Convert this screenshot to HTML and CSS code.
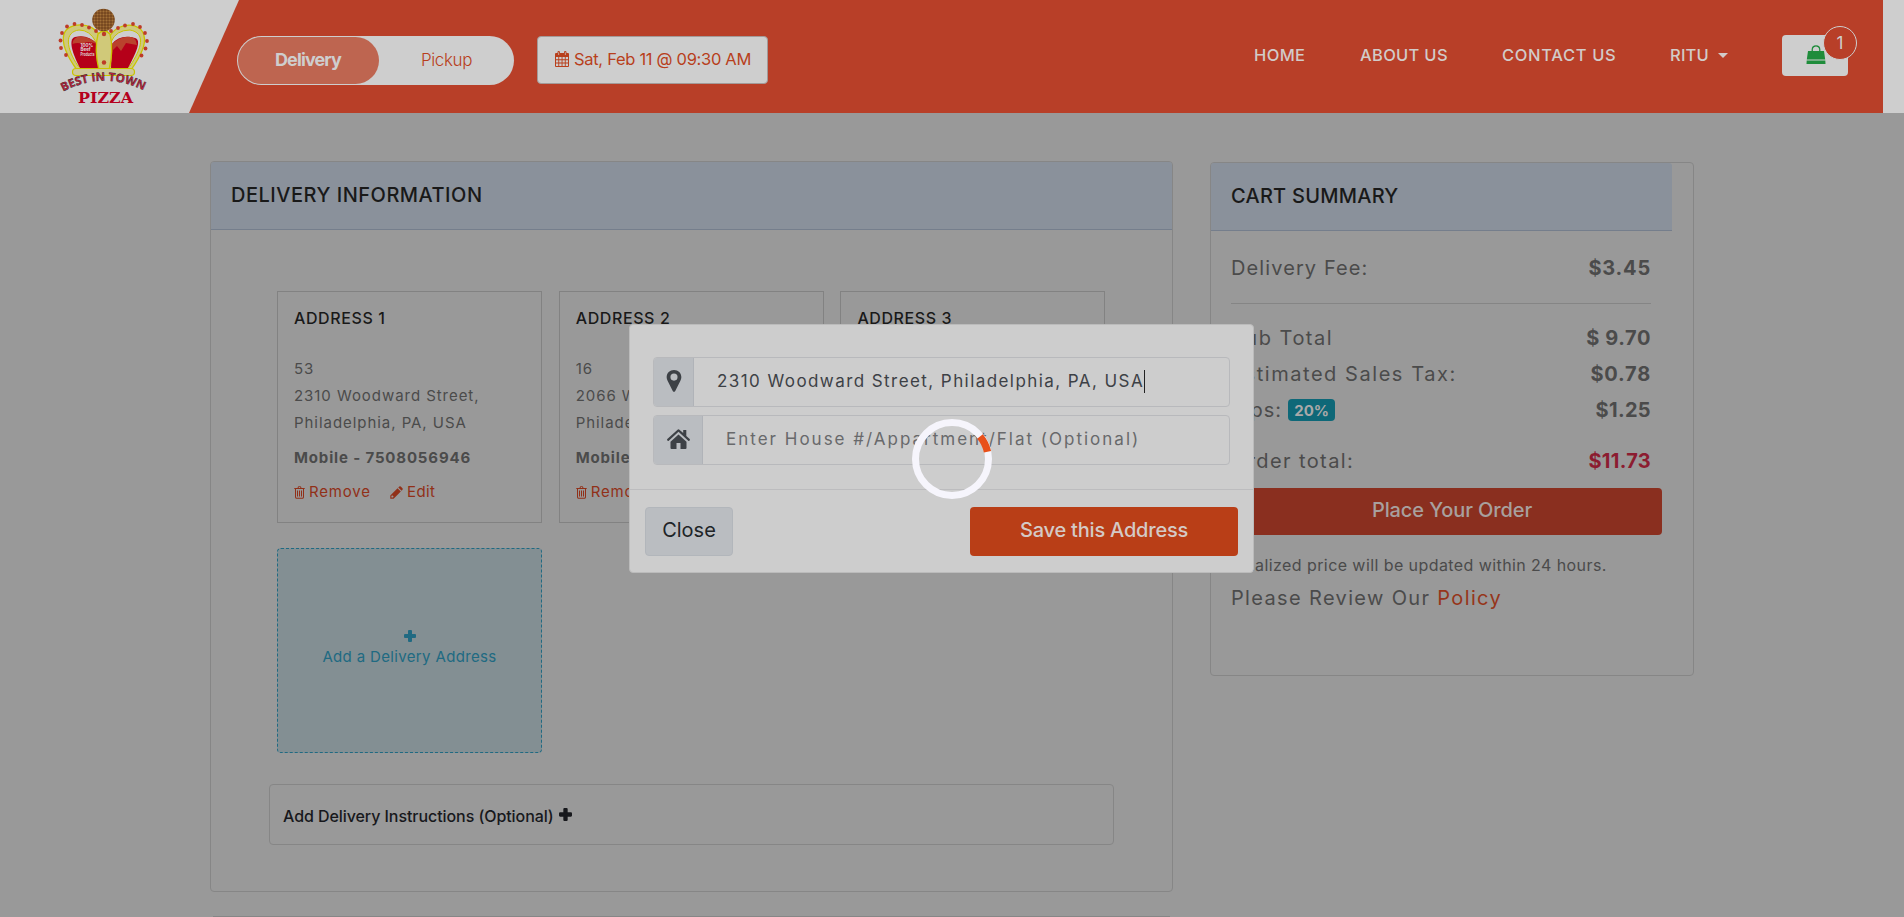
FILE: index.html
```html
<!DOCTYPE html>
<html lang="en">
<head>
<meta charset="utf-8">
<title>Best In Town Pizza - Checkout</title>
<link rel="stylesheet" href="styles.css">
</head>
<body>
<svg class="sprite" aria-hidden="true">
  <symbol id="trash" viewBox="0 0 11 13"><path fill-rule="evenodd" d="M3.500 1.900 4 .7Q4.200 .2 4.700 .2H6.300Q6.800 .2 7 .7L7.500 1.900H10.700V3H10V10.900Q10 12.700 8.700 12.700H2.300Q1 12.700 1 10.900V3H.3V1.900ZM4.600 1.900H6.400L6.100 1.100H4.900ZM2 3V10.900Q2 11.700 2.600 11.700H8.400Q9 11.700 9 10.900V3ZM3 4.400H4V10.400H3ZM5 4.400H6V10.400H5ZM7 4.400H8V10.400H7Z"/></symbol>
  <symbol id="pencil" viewBox="0 0 13 13"><path fill-rule="evenodd" d="M.3 12.700V9.400L7.500 2.200L10.800 5.500L3.600 12.700ZM1.400 10.100V11.600H2.900L3.700 10.800L2.200 9.300ZM8.300 1.400 9.300 .5Q10 0 10.700 .5L12.500 2.300Q13 3 12.500 3.700L11.600 4.700Z"/></symbol>
  <symbol id="plus" viewBox="0 0 12 12"><path d="M5 0H7Q8 0 8 1V4H11Q12 4 12 5V7Q12 8 11 8H8V11Q8 12 7 12H5Q4 12 4 11V8H1Q0 8 0 7V5Q0 4 1 4H4V1Q4 0 5 0Z"/></symbol>
</svg>

<header class="header">
  <div class="brand">
    <svg class="logo" viewBox="0 0 110 110">
      <defs>
        <pattern id="crust" width="3" height="3" patternUnits="userSpaceOnUse"><rect width="3" height="3" fill="#8d5a2a"/><circle cx="1" cy="1" r=".8" fill="#5d3514"/><circle cx="2.500" cy="2.500" r=".5" fill="#a87a3c"/></pattern>
        <path id="arc" d="M13 91.500Q54 70 96 91.500"/>
      </defs>
      <path d="M27 70C19 59 11 44 14 34C18 22 42 21 50 36C53 29 57 29 60 36C68 21 92 22 94 36C97 46 88 60 81 70Z" fill="#cfc97a" stroke="#c9c400" stroke-width="1.300"/>
      <path d="M28 66C16 48 14 32 29 30Q40 30 46 42V67Z" fill="#cecece" stroke="#c9c400"/>
      <path d="M80 66C92 48 96 33 80 30Q66 30 61 42V67Z" fill="#cecece" stroke="#c9c400"/>
      <path d="M30 68C22 53 18 39 25 37Q38 34 47 44L48 68Z" fill="#b50019"/>
      <path d="M78 68C86 53 92 40 85 38Q70 34 62 44L61 68Z" fill="#b50019"/>
      <path d="M22.500 44Q23 36 32 36.500Q42 38 47 44Q37 40 33 44Q27 42 22.500 44ZM87 45Q86 35 76 37Q68 38 62 44L63 50L67 46L71 51L76 43Z" fill="#ba422d"/>
      <path d="M48 34Q54 28 60 34Q64 50 59 70H49Q44 50 48 34Z" fill="#d0c979" stroke="#c9c400" stroke-width="1.300"/>
      <rect x="22.500" y="68.500" width="62" height="7" rx="3.500" fill="#cfc99c" stroke="#c9c400" stroke-width="1.200"/>
      <circle cx="53.500" cy="20" r="11.300" fill="url(#crust)"/>
      <g fill="#bd3b27"><circle cx="16" cy="55" r="1.900"/><circle cx="11" cy="48" r="1.900"/><circle cx="10.500" cy="40.500" r="1.900"/><circle cx="12" cy="33" r="1.900"/><circle cx="17" cy="26.500" r="1.900"/><circle cx="24.500" cy="24" r="1.900"/><circle cx="32" cy="25" r="1.900"/><circle cx="39" cy="27.500" r="1.900"/><circle cx="46" cy="31" r="1.900"/><circle cx="54" cy="34" r="2.200"/><circle cx="61" cy="31" r="1.900"/><circle cx="68" cy="28" r="1.900"/><circle cx="75" cy="25.500" r="1.900"/><circle cx="83" cy="24" r="1.900"/><circle cx="90" cy="27" r="1.900"/><circle cx="95" cy="33" r="1.900"/><circle cx="97" cy="41" r="1.900"/><circle cx="95.500" cy="48.500" r="1.900"/><circle cx="91.500" cy="55.500" r="1.900"/><circle cx="54" cy="62.500" r="2.200"/></g>
      <g class="tiny"><text x="30.500" y="46.500">100%</text><text x="30.500" y="51.300">Beef</text><text x="30.500" y="56" textLength="14" lengthAdjust="spacingAndGlyphs">Products</text></g>
      <text class="arc-text"><textPath href="#arc" textLength="84" lengthAdjust="spacingAndGlyphs">BEST IN TOWN</textPath></text>
      <text class="pizza" x="28" y="102.500" textLength="55" lengthAdjust="spacingAndGlyphs">PIZZA</text>
    </svg>
  </div>
  <div class="toggle"><span class="toggle-on">Delivery</span><span class="toggle-off">Pickup</span></div>
  <div class="datebox">
    <svg width="14" height="16" viewBox="0 0 14 16"><path fill-rule="evenodd" d="M0 3Q0 2 1 2H2.500V1Q2.500 0 3.700 0T5 1V2H9V1Q9 0 10.200 0T11.500 1V2H13Q14 2 14 3V15Q14 16 13 16H1Q0 16 0 15ZM1 6V8.300H3.300V6ZM4.200 6V8.300H6.600V6ZM7.500 6V8.300H9.800V6ZM10.700 6V8.300H13V6ZM1 9.200V11.600H3.300V9.200ZM4.200 9.200V11.600H6.600V9.200ZM7.500 9.200V11.600H9.800V9.200ZM10.700 9.200V11.600H13V9.200ZM1 12.500V15H3.300V12.500ZM4.200 12.500V15H6.600V12.500ZM7.500 12.500V15H9.800V12.500ZM10.700 12.500V15H13V12.500ZM3.400 1.200V4H4.100V1.200ZM9.900 1.200V4H10.600V1.200Z"/></svg>
    <span>Sat, Feb 11 @ 09:30 AM</span>
  </div>
  <nav class="nav">
    <a class="home">HOME</a><a class="about">ABOUT US</a><a class="contact">CONTACT US</a><a class="user">RITU<i class="caret"></i></a>
    <div class="basket">
      <svg width="20" height="20" viewBox="0 0 20 20"><path d="M2 6H18L19.200 14.500H.8ZM.7 15.500H19.300L19.500 19H.5Z" fill="#1f8c3b"/><path d="M6.300 9V4.500Q6.500 1 10 1T13.700 4.500V9" fill="none" stroke="#1f8c3b" stroke-width="1.400"/><path d="M7.300 6V4.500Q7.500 2 10 2T12.700 4.500V6" fill="none" stroke="#cecece" stroke-width=".6"/></svg>
      <span class="count">1</span>
    </div>
  </nav>
</header>

<main class="page">
  <div class="left">
    <section class="card delivery">
      <h2 class="card-head t-delivery">DELIVERY INFORMATION</h2>
      <div class="addresses">
        <article class="address"><h3>ADDRESS 1</h3><p>53<br>2310 Woodward Street,<br>Philadelphia, PA, USA</p><b>Mobile - 7508056946</b>
          <div class="links"><svg width="11" height="13"><use href="#trash"/></svg><a class="remove">Remove</a><svg width="13" height="13"><use href="#pencil"/></svg><a class="edit">Edit</a></div></article>
        <article class="address"><h3>ADDRESS 2</h3><p>16<br>2066 W<br>Philadelphia</p><b>Mobile</b>
          <div class="links"><svg width="11" height="13"><use href="#trash"/></svg><a class="remove">Remove</a></div></article>
        <article class="address"><h3>ADDRESS 3</h3></article>
        <div class="add"><svg width="12" height="12"><use href="#plus"/></svg><span>Add a Delivery Address</span></div>
      </div>
      <div class="instructions"><span>Add Delivery Instructions (Optional)</span><svg width="13" height="13" viewBox="0 0 12 12"><use href="#plus"/></svg></div>
    </section>
    <section class="next"></section>
  </div>
  <aside class="card cart">
    <h2 class="card-head t-cart">CART SUMMARY</h2>
    <div class="cart-body">
      <div class="row fee"><span class="l-fee">Delivery Fee:</span><b>$3.45</b></div>
      <div class="row"><span class="l-sub">Sub Total</span><b class="v-sub">$ 9.70</b></div>
      <div class="row"><span class="l-tax">Estimated Sales Tax:</span><b>$0.78</b></div>
      <div class="row tips"><span class="l-tips">Tips: <em class="badge">20%</em></span><b class="v-tips">$1.25</b></div>
      <div class="row total"><span class="l-total">Order total:</span><b>$11.73</b></div>
      <button class="place">Place Your Order</button>
      <p class="note">Finalized price will be updated within 24 hours.</p>
      <p class="review">Please Review Our <a>Policy</a></p>
    </div>
  </aside>
</main>

<div class="modal">
  <div class="modal-body">
    <div class="field"><span class="addon pin"><svg width="16" height="22" viewBox="0 0 14 21"><path fill-rule="evenodd" d="M7 0C11 0 14 3 14 6.800C14 8.300 13.600 9.400 13 10.600L8.200 20Q7 21.600 5.800 20L1 10.600C.4 9.400 0 8.300 0 6.800C0 3 3 0 7 0ZM7 3.400A3.400 3.400 0 1 0 7 10.200A3.400 3.400 0 0 0 7 3.400Z"/></svg></span><span class="street">2310 Woodward Street, Philadelphia, PA, USA</span><i class="cursor"></i></div>
    <div class="field"><span class="addon house"><svg width="23" height="20" viewBox="0 0 23 18" preserveAspectRatio="none"><path d="M11.500 5 19.500 11.500V17Q19.500 18 18.500 18H13.500V12.500H9.500V18H4.500Q3.500 18 3.500 17V11.500ZM11.500 2.500 1.500 10.700Q1 11 .6 10.500L.2 10Q-.1 9.500 .3 9.100L10.300 .8Q11.500 -.2 12.700 .8L16.200 3.700V1H19.300V6.300L22.700 9.100Q23.100 9.500 22.800 10L22.400 10.500Q22 11 21.500 10.700Z"/></svg></span><span class="flat">Enter House #/Appartment/Flat (Optional)</span></div>
  </div>
  <div class="modal-foot"><button class="close">Close</button><button class="save">Save this Address</button></div>
</div>
<svg class="spinner" viewBox="0 0 80 80"><circle cx="40" cy="40" r="36.500" fill="none" stroke="#f6f5fc" stroke-width="7"/><path d="M68 17.500A36 36 0 0 1 75.500 32.700" fill="none" stroke="#e8501a" stroke-width="7.400"/></svg>
</body>
</html>
```
FILE: styles.css
```css
* { box-sizing: border-box; }
body { margin: 0; height: 917px; overflow: hidden; background: #999; color: #4b4b4b; font-family: Inter, "Liberation Sans", sans-serif; font-weight: 400; }
h2, h3, p { margin: 0; font-weight: 500; }
b { font-weight: 700; }
.sprite { position: absolute; width: 0; height: 0; }
svg { display: block; flex: none; fill: currentColor; }
button { border: 0; padding: 0; font: inherit; }

.header { display: flex; height: 113px; width: 1904px; background: #b83f28; border-right: 21px solid #cecece; white-space: nowrap; }
.brand { flex: none; width: 239px; height: 113px; padding-left: 50px; background: #cecece; clip-path: polygon(0 0, 100% 0, 189px 100%, 0 100%); }
.logo { width: 110px; height: 110px; }
.tiny { font: 700 4.500px Inter, sans-serif; fill: #ddd; }
.arc-text { font: 700 11.500px "Open Sans", sans-serif; fill: #c0203a; stroke: #252525; stroke-width: .4px; }
.pizza { font: 700 15px "DejaVu Serif", serif; fill: #b5001d; }
.toggle { display: flex; flex: none; width: 277px; height: 49px; margin: 36px 23px 0 -2px; padding: 1px; border-radius: 25px; background: #cecece; line-height: 46px; }
.toggle-on { width: 141px; padding-left: 37px; border-radius: 24px; background: #be6550; color: #cecece; font-weight: 700; font-size: 18px; letter-spacing: -.9px; }
.toggle-off { padding-left: 42px; color: #b83f1c; font-weight: 300; font-size: 17px; letter-spacing: -.4px; }
.datebox { display: flex; align-items: center; flex: none; gap: 5px; width: 231px; height: 48px; margin-top: 36px; padding: 0 0 2px 17px; border: 1px solid #a39a98; border-radius: 4px; background: #cecece; color: #b83f1c; font-size: 16.500px; letter-spacing: -.3px; }
.nav { display: flex; flex: 1; height: 110px; padding-left: 486px; align-items: center; color: #d2cbc9; font-size: 16.500px; font-weight: 500; }
.nav a { flex: none; }
.home { width: 106px; letter-spacing: .35px; }
.about { width: 142px; letter-spacing: .3px; }
.contact { width: 168px; letter-spacing: .65px; }
.user { display: flex; align-items: center; gap: 9px; width: 112px; letter-spacing: .2px; }
.caret { border: 5px solid transparent; border-top-color: #d2cbc9; border-bottom: 0; }
.basket { position: relative; flex: none; width: 66px; height: 41px; padding: 10px 0 0 24px; border-radius: 4px; background: #cecece; }
.count { position: absolute; left: 41px; top: -9px; width: 34px; height: 34px; border: 1px solid #cecece; border-radius: 50%; background: #b83f28; color: #cecece; line-height: 32px; font-weight: 400; font-size: 17px; text-align: center; }

.page { display: flex; align-items: flex-start; gap: 37px; padding: 48px 0 0 210px; }
.left { display: grid; gap: 24px; width: 963px; }
.card { border: 1px solid #868686; border-radius: 4px; }
.card-head { height: 68px; padding-left: 20px; border-bottom: 1px solid #757e8c; border-radius: 3px 3px 0 0; background: #8a919b; color: #191919; font-size: 20px; line-height: 66px; }
.t-delivery { letter-spacing: .5px; }
.t-cart { width: 461px; letter-spacing: .25px; }
.delivery { height: 731px; }
.next { height: 1px; margin: 0 3px; background: #868686; }
.addresses { display: grid; grid-template-columns: repeat(3, 265px); grid-template-rows: 232px 205px; column-gap: 16.700px; row-gap: 25px; padding: 61px 0 0 66px; }
.address { padding: 16px 0 0 16px; border: 1px solid #828282; overflow: hidden; white-space: nowrap; font-size: 15px; }
.address h3 { margin-bottom: 27px; color: #191919; font-size: 16px; line-height: 20px; letter-spacing: .6px; }
.address p { font-weight: 400; line-height: 27px; letter-spacing: .95px; }
.address b { display: block; margin-top: 8px; line-height: 27px; letter-spacing: .85px; }
.links { display: flex; align-items: center; margin-top: 8px; color: #913018; line-height: 26px; }
.remove { width: 85px; padding-left: 4px; letter-spacing: .8px; }
.edit { padding-left: 4px; letter-spacing: .4px; }
.add { display: flex; flex-direction: column; align-items: center; gap: 5px; padding-top: 81px; border: 1px dashed #206a82; border-radius: 4px; background: #838f93; color: #206a82; font-size: 15px; line-height: 20px; letter-spacing: .35px; }
.instructions { display: flex; align-items: center; gap: 5px; width: 845px; height: 61px; margin: 31px 0 0 58px; padding: 0 0 0 13px; border: 1px solid #868686; border-radius: 4px; color: #17181c; font-size: 16px; font-weight: 500; letter-spacing: -.07px; }
.instructions span { line-height: 20px; padding-top: 2px; }

.cart { width: 484px; height: 514px; margin-top: 1px; }
.cart-body { padding: 20px 0 0 20px; white-space: nowrap; font-size: 20px; }
.row { display: flex; justify-content: space-between; width: 420px; height: 36px; line-height: 35px; }
.row b { letter-spacing: .8px; }
.row .v-sub { letter-spacing: .6px; }
.row .v-tips { letter-spacing: .35px; }
.fee { height: 53px; margin-bottom: 17px; border-bottom: 1px solid #858585; }
.l-fee { letter-spacing: 1.100px; }
.l-sub { letter-spacing: 1.500px; }
.l-tax { letter-spacing: 1.550px; }
.l-tips { letter-spacing: .9px; }
.l-total { letter-spacing: 1.400px; }
.badge { display: inline-block; height: 22px; padding: 0 6px; border-radius: 4px; background: #0e6878; color: #a9a9a9; font: 700 15px/23px Inter, sans-serif; letter-spacing: -.1px; vertical-align: 1px; }
.tips { height: 51px; }
.total { height: 44px; }
.total b { color: #8c1c30; letter-spacing: .3px; }
.place { display: block; width: 420px; height: 47px; margin: 0 0 0 11px; padding-bottom: 3px; border-radius: 4px; background: #8a2f1f; color: #a8a09e; font-weight: 500; letter-spacing: -.1px; }
.note { margin-top: 18px; font-size: 16px; font-weight: 400; line-height: 24px; letter-spacing: .42px; }
.review { margin-top: 6px; font-weight: 400; line-height: 30px; letter-spacing: 1.350px; }
.review a { color: #96351a; }

.modal { position: absolute; left: 629px; top: 324px; width: 625px; height: 249px; border: 1px solid #bbb; border-radius: 4px; background: #cdcdcd; white-space: nowrap; }
.modal-body { display: grid; gap: 8px; height: 165px; padding: 32px 23px 0; align-content: start; border-bottom: 1px solid #bcbcbe; }
.field { display: flex; align-items: center; height: 50px; border: 1px solid #b8b9bc; border-radius: 4px; font-size: 17px; }
.addon { display: grid; place-items: center; height: 48px; border-right: 1px solid #b0b3b8; background: #babdc1; color: #3d4146; border-radius: 3px 0 0 3px; }
.pin { width: 40px; }
.house { width: 49px; }
.pin svg, .house svg { margin-bottom: 2px; }
.street { margin-left: 23px; padding-bottom: 2px; color: #3d4146; letter-spacing: 1.430px; }
.cursor { width: 1px; height: 23px; margin-bottom: 1px; background: #222; }
.flat { margin-left: 23px; padding-bottom: 2px; color: #68696b; letter-spacing: 2px; }
.modal-foot { display: flex; justify-content: space-between; padding: 17px 15px; font-size: 20px; }
.close { width: 88px; height: 49px; padding-bottom: 4px; border: 1px solid #b2b6bb; border-radius: 4px; background: #babdc1; color: #202427; font-weight: 400; }
.save { width: 268px; height: 49px; padding-bottom: 4px; border-radius: 4px; background: #b93e17; color: #d4cac6; font-weight: 500; letter-spacing: -.2px; }
.spinner { position: absolute; left: 912px; top: 419px; width: 80px; height: 80px; }
```
